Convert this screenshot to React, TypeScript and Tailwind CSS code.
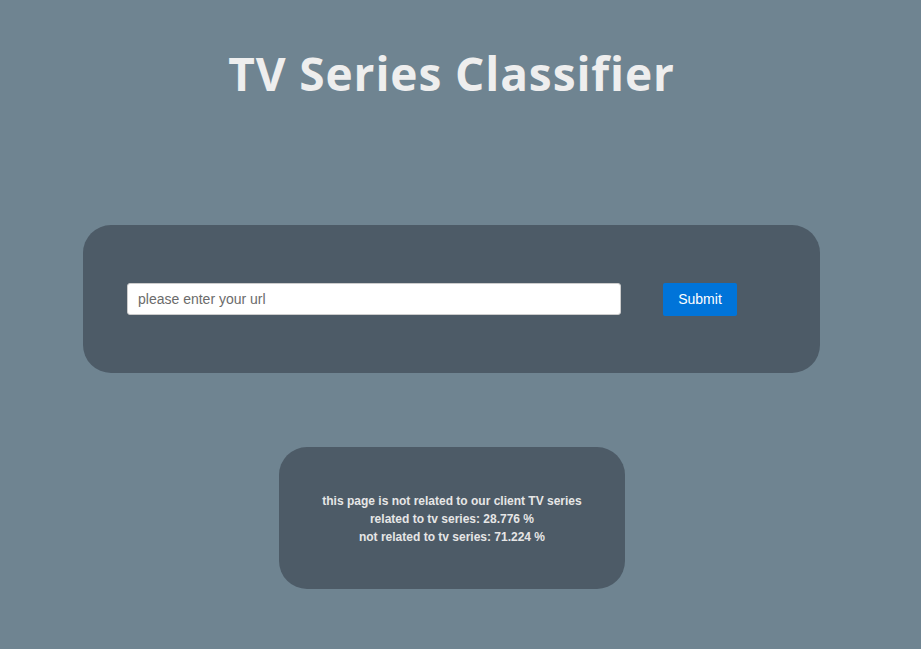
export default function App() {
  return (
    <div className="min-h-[649px] w-full bg-[#6f8491] font-['Liberation_Sans',Arial,sans-serif]">
      <h1 className="pt-[42px] pr-[18px] text-center font-['Open_Sans',sans-serif] text-[46px] font-bold leading-[62px] tracking-[0.9px] text-[#eeeeee]">
        TV Series Classifier
      </h1>

      <div className="mt-[121px] ml-[83px] flex h-[148px] w-[737px] items-center rounded-[28px] bg-[#4d5b67] pl-[44px]">
        <input
          type="text"
          placeholder="please enter your url"
          className="h-[32px] w-[494px] rounded-[3px] border border-[#ccc] bg-white px-[10px] text-[14px] text-[#333] placeholder:text-[#6b6b6b] outline-none"
        />
        <button className="ml-[42px] h-[33px] w-[74px] rounded-[2px] bg-[#0074d9] text-[14px] text-white">
          Submit
        </button>
      </div>

      <div className="mt-[74px] ml-[279px] flex h-[142px] w-[346px] flex-col items-center justify-center rounded-[28px] bg-[#4d5b67] pt-[2px] text-center text-[12px] font-bold leading-[18px] text-[#e6e6e6]">
        <p>this page is not related to our client TV series</p>
        <p>related to tv series: 28.776 %</p>
        <p>not related to tv series: 71.224 %</p>
      </div>
    </div>
  );
}
